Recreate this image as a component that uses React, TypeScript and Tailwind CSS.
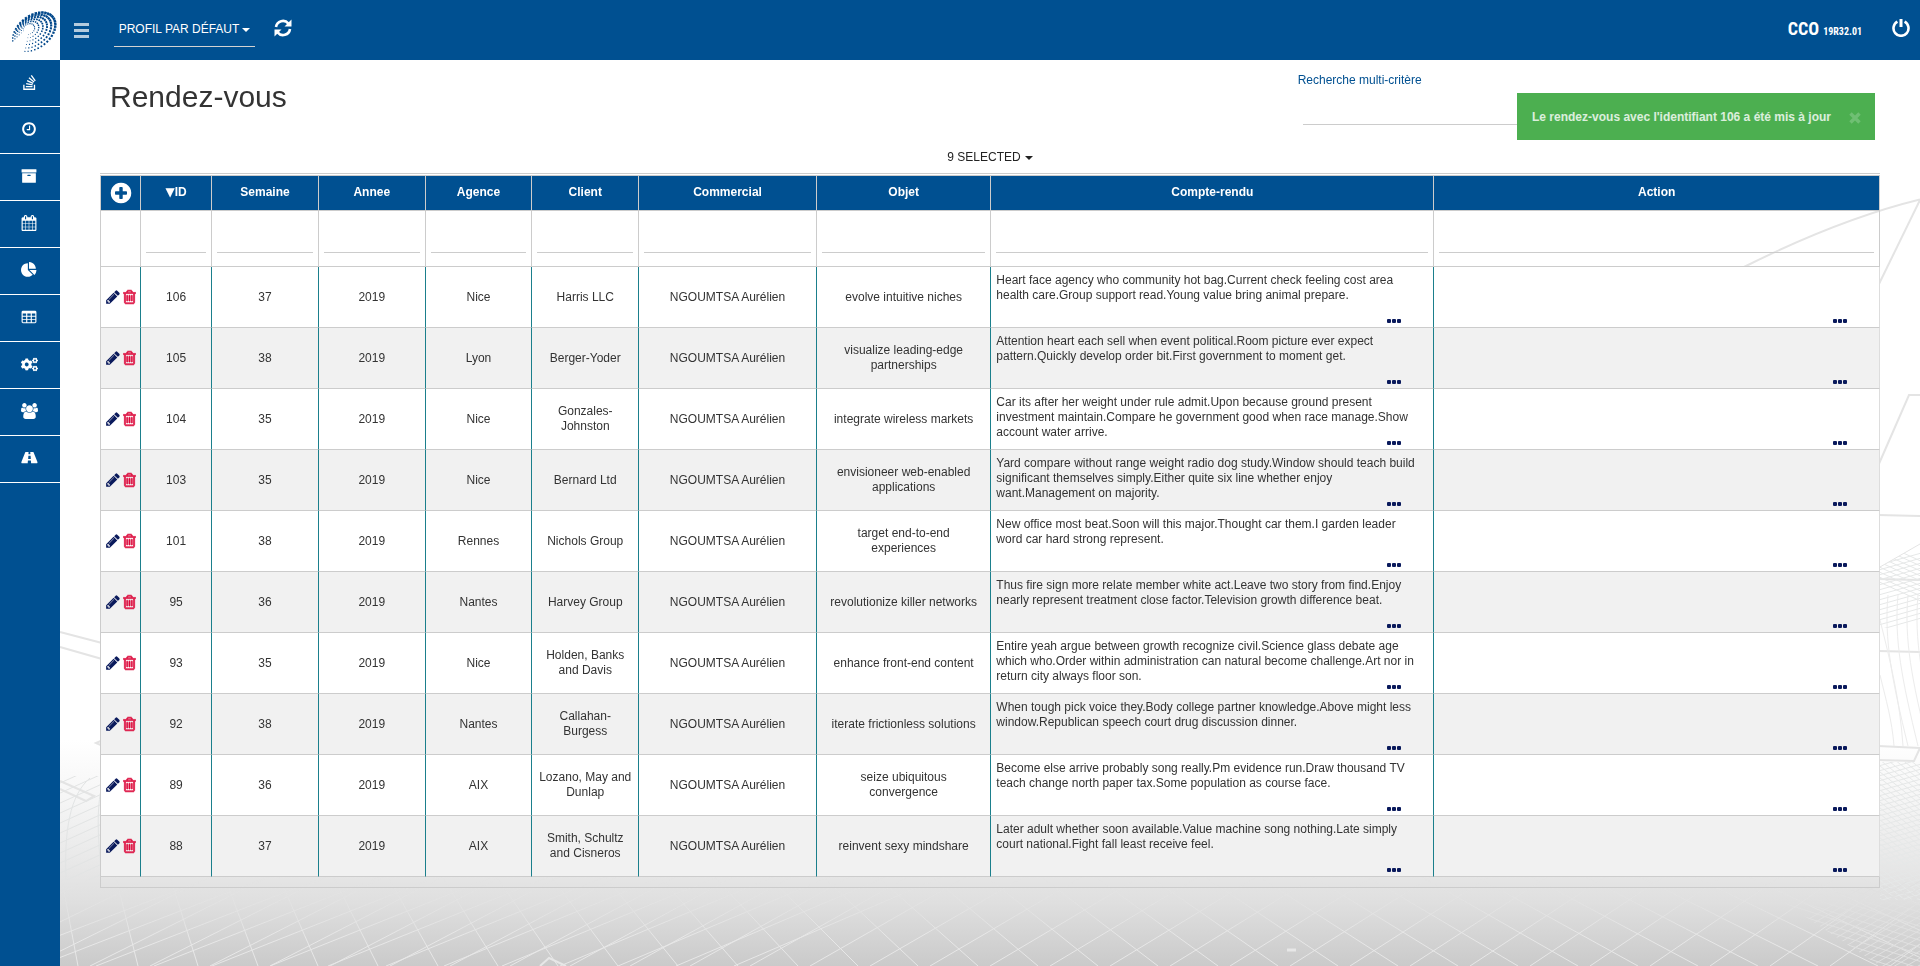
import type { ReactNode } from "react";
import { FaCogs, FaStackOverflow } from "react-icons/fa";

const glyphs = {
  clock:
    "M1024 544v448q0 14-9 23t-23 9h-320q-14 0-23-9t-9-23v-64q0-14 9-23t23-9h224v-352q0-14 9-23t23-9h64q14 0 23 9t9 23zm416 352q0-148-73-273t-198-198-273-73-273 73-198 198-73 273 73 273 198 198 273 73 273-73 198-198 73-273zm224 0q0 209-103 385.5t-279.5 279.5-385.5 103-385.5-103-279.5-279.5-103-385.5 103-385.5 279.5-279.5 385.5-103 385.5 103 279.5 279.5 103 385.5z",
  archive:
    "M1088 832q0-26-19-45t-45-19h-256q-26 0-45 19t-19 45 19 45 45 19h256q26 0 45-19t19-45zm576-192v960q0 26-19 45t-45 19h-1408q-26 0-45-19t-19-45v-960q0-26 19-45t45-19h1408q26 0 45 19t19 45zm64-448v256q0 26-19 45t-45 19h-1536q-26 0-45-19t-19-45v-256q0-26 19-45t45-19h1536q26 0 45 19t19 45z",
  calendar:
    "M192 1664h288v-288h-288v288zm352 0h320v-288h-320v288zm-352-352h288v-320h-288v320zm352 0h320v-320h-320v320zm-352-384h288v-288h-288v288zm736 736h320v-288h-320v288zm-384-736h320v-288h-320v288zm768 736h288v-288h-288v288zm-384-352h320v-320h-320v320zm-352-864v-288q0-13-9.5-22.5t-22.5-9.5h-64q-13 0-22.5 9.5t-9.5 22.5v288q0 13 9.5 22.5t22.5 9.5h64q13 0 22.5-9.5t9.5-22.5zm736 864h288v-320h-288v320zm-384-384h320v-288h-320v288zm384 0h288v-288h-288v288zm32-480v-288q0-13-9.5-22.5t-22.5-9.5h-64q-13 0-22.5 9.5t-9.5 22.5v288q0 13 9.5 22.5t22.5 9.5h64q13 0 22.5-9.5t9.5-22.5zm384-64v1280q0 52-38 90t-90 38h-1408q-52 0-90-38t-38-90v-1280q0-52 38-90t90-38h128v-96q0-66 47-113t113-47h64q66 0 113 47t47 113v96h384v-96q0-66 47-113t113-47h64q66 0 113 47t47 113v96h128q52 0 90 38t38 90z",
  pie: "M768 890l546 546q-106 108-247.5 168t-298.5 60q-209 0-385.5-103t-279.5-279.5-103-385.5 103-385.5 279.5-279.5 385.5-103v762zm187 6h773q0 157-60 298.5t-168 247.5zm709-128h-768v-768q209 0 385.5 103t279.5 279.5 103 385.5z",
  table:
    "M224 192h1344a160 160 0 0 1 160 160v1088a160 160 0 0 1-160 160h-1344a160 160 0 0 1-160-160v-1088a160 160 0 0 1 160-160zM192 512v256h384v-256zM704 512v256h384v-256zM1216 512v256h384v-256zM192 864v256h384v-256zM704 864v256h384v-256zM1216 864v256h384v-256zM192 1216v256h384v-256zM704 1216v256h384v-256zM1216 1216v256h384v-256z",
  users:
    "M593 896q-162 5-265 128h-134q-82 0-138-40.5t-56-118.5q0-353 124-353 6 0 43.5 21t97.5 42.5 119 21.5q67 0 133-23-5 37-5 66 0 139 81 256zm1071 637q0 120-73 189.5t-194 69.5h-874q-121 0-194-69.5t-73-189.5q0-53 3.5-103.5t14-109 26.5-108.5 43-97.5 62-81 85.5-53.5 111.5-20q10 0 43 21.5t73 48 107 48 135 21.5 135-21.5 107-48 73-48 43-21.5q61 0 111.5 20t85.5 53.5 62 81 43 97.5 26.5 108.5 14 109 3.5 103.5zm-1024-1277q0 106-75 181t-181 75-181-75-75-181 75-181 181-75 181 75 75 181zm704 384q0 159-112.5 271.5t-271.5 112.5-271.5-112.5-112.5-271.5 112.5-271.5 271.5-112.5 271.5 112.5 112.5 271.5zm576 225q0 78-56 118.5t-138 40.5h-134q-103-123-265-128 81-117 81-256 0-29-5-66 66 23 133 23 59 0 119-21.5t97.5-42.5 43.5-21q124 0 124 353zm-128-609q0 106-75 181t-181 75-181-75-75-181 75-181 181-75 181 75 75 181z",
  road: "M1111 988v-4l-24-320q-1-13-11-22.5t-23-9.5h-186q-13 0-23 9.5t-11 22.5l-24 320v4q-1 12 8 20t21 8h244q12 0 21-8t8-20zm749 428q0 73-46 73h-704q13 0 22-9.5t8-22.5l-20-256q-1-13-11-22.5t-23-9.5h-272q-13 0-23 9.5t-11 22.5l-20 256q-1 13 8 22.5t22 9.5h-704q-46 0-46-73 0-54 26-116l417-1044q8-19 26-33t38-14h339q-13 0-23 9.5t-11 22.5l-15 192q-1 14 8 23t22 9h166q13 0 22-9t8-23l-15-192q-1-13-11-22.5t-23-9.5h339q20 0 38 14t26 33l417 1044q26 62 26 116z",
  plus: "M1344 960v-128q0-26-19-45t-45-19h-256v-256q0-26-19-45t-45-19h-128q-26 0-45 19t-19 45v256h-256q-26 0-45 19t-19 45v128q0 26 19 45t45 19h256v256q0 26 19 45t45 19h128q26 0 45-19t19-45v-256h256q26 0 45-19t19-45zm320-64q0 209-103 385.5t-279.5 279.5-385.5 103-385.5-103-279.5-279.5-103-385.5 103-385.5 279.5-279.5 385.5-103 385.5 103 279.5 279.5 103 385.5z",
  pencil:
    "M491 1536l91-91-235-235-91 91v107h128v128h107zm523-928q0-22-22-22-10 0-17 7l-542 542q-7 7-7 17 0 22 22 22 10 0 17-7l542-542q7-7 7-17zm-54-192l416 416-832 832h-416v-416zm683 96q0 53-37 90l-166 166-416-416 166-165q36-38 90-38 53 0 91 38l235 234q37 39 37 91z",
  trash:
    "M704 736v576q0 14-9 23t-23 9h-64q-14 0-23-9t-9-23v-576q0-14 9-23t23-9h64q14 0 23 9t9 23zm256 0v576q0 14-9 23t-23 9h-64q-14 0-23-9t-9-23v-576q0-14 9-23t23-9h64q14 0 23 9t9 23zm256 0v576q0 14-9 23t-23 9h-64q-14 0-23-9t-9-23v-576q0-14 9-23t23-9h64q14 0 23 9t9 23zm128 724v-948h-896v948q0 22 7 40.5t14.5 27 10.5 8.5h832q3 0 10.5-8.5t14.5-27 7-40.5zm-672-1076h448l-48-117q-7-9-17-11h-317q-10 2-17 11zm928 32v64q0 14-9 23t-23 9h-96v948q0 83-47 143.5t-113 60.5h-832q-66 0-113-58.5t-47-141.5v-952h-96q-14 0-23-9t-9-23v-64q0-14 9-23t23-9h309l70-167q15-37 54-63t79-26h320q40 0 79 26t54 63l70 167h309q14 0 23 9t9 23z",
};

function Glyph({ name, box = "0 0 1792 1792", className }: { name: keyof typeof glyphs; box?: string; className: string }) {
  return (
    <svg viewBox={box} fill="currentColor" fillRule={name === "table" ? "evenodd" : undefined} className={className} aria-hidden="true">
      <path d={glyphs[name]} />
    </svg>
  );
}

function RefreshIcon() {
  return (
    <svg viewBox="0 0 18 18" className="size-[18px]" fill="none" stroke="currentColor" strokeWidth="2.600" aria-hidden="true">
      <path d="M2 8A7 7 0 0 1 14.400 4.600" />
      <path d="M17.500 0.500v7h-7z" fill="currentColor" stroke="none" />
      <path d="M16 10A7 7 0 0 1 3.600 13.400" />
      <path d="M0.500 17.500v-7h7z" fill="currentColor" stroke="none" />
    </svg>
  );
}

function PowerIcon() {
  return (
    <svg viewBox="0 0 18 18" className="size-[18px]" fill="none" stroke="currentColor" strokeWidth="2.600" aria-hidden="true">
      <path d="M5.400 2.700A7.500 7.500 0 1 0 12.600 2.700" />
      <path d="M9 0v8" strokeWidth="3" />
    </svg>
  );
}

function Caret() {
  return (
    <svg viewBox="0 0 8 4" fill="currentColor" className="h-1 w-2" aria-hidden="true">
      <path d="M0 0h8L4 4z" />
    </svg>
  );
}

function Logo() {
  const dots: ReactNode[] = [];
  const tilt = (-38 * Math.PI) / 180;
  for (let ring = 0; ring < 6; ring++) {
    const rx = 6 + ring * 3.6;
    const ry = 5 + ring * 2.2;
    const cx = 29 + ring;
    const cy = 29 + ring * 0.6;
    const count = 14 + ring * 4;
    for (let i = 0; i < count; i++) {
      const t = -2.75 + (i / count) * 5.4;
      const x = cx + rx * Math.cos(t) * Math.cos(tilt) - ry * Math.sin(t) * Math.sin(tilt);
      const y = cy + rx * Math.cos(t) * Math.sin(tilt) + ry * Math.sin(t) * Math.cos(tilt);
      const weight = 0.4 + 0.6 * Math.max(0, Math.cos(t * 0.56 + 0.15));
      const size = weight * (1.2 + ring * 0.28);
      dots.push(
        <rect
          key={`${ring}-${i}`}
          x={x - size / 2}
          y={y - size / 2}
          width={size}
          height={size}
          transform={`rotate(${(t * 180) / Math.PI - 38} ${x} ${y})`}
        />,
      );
    }
  }
  return (
    <svg viewBox="0 0 60 60" fill="#00478a" className="size-[60px]" role="img" aria-label="Logo">
      {dots}
    </svg>
  );
}

const range = (n: number) => Array.from({ length: n }, (_, i) => i);

function Backdrop() {
  return (
    <svg
      viewBox="0 0 1920 966"
      preserveAspectRatio="xMidYMax slice"
      fill="none"
      className="pointer-events-none fixed inset-0 -z-10 h-full w-full"
      aria-hidden="true"
    >
      <defs>
        <linearGradient id="floor" x1="0" y1="0" x2="0" y2="1">
          <stop offset="0" stopColor="#ffffff" />
          <stop offset="0.25" stopColor="#f6f6f6" />
          <stop offset="0.6" stopColor="#e5e5e5" />
          <stop offset="0.72" stopColor="#dfdfdf" />
          <stop offset="1" stopColor="#cacaca" />
        </linearGradient>
        <linearGradient id="fade" x1="0" y1="0" x2="0" y2="1">
          <stop offset="0" stopColor="#ffffff" stopOpacity="0" />
          <stop offset="1" stopColor="#ffffff" />
        </linearGradient>
        <mask id="near">
          <rect x="0" y="876" width="1920" height="60" fill="url(#fade)" />
          <rect x="0" y="936" width="1920" height="30" fill="#ffffff" />
        </mask>
        <clipPath id="rightMesh">
          <path d="M1880 567L1920 544V628H1880z" />
        </clipPath>
        <clipPath id="rightLow">
          <path d="M1880 762H1920V900H1880z" />
        </clipPath>
        <clipPath id="rightNear">
          <path d="M1780 900L1920 880V966H1880z" />
        </clipPath>
        <clipPath id="leftLow">
          <path d="M60 776H100V880H60z" />
        </clipPath>
      </defs>
      <rect width="1920" height="966" fill="#ffffff" />
      <rect y="740" width="1920" height="226" fill="url(#floor)" />

      <g mask="url(#near)" stroke="#e7e7e7">
        {range(36).map((i) => (
          <path key={i} d={`M${78 + i * 60} 966L${60 + i * 54} 870`} />
        ))}
        {range(36).map((i) => (
          <path key={i} d={`M${-150 + i * 60} 966L${50 + i * 58} 870`} />
        ))}
        {range(14).map((i) => (
          <path key={i} d={`M${-20 + i * 58} 966L${230 + i * 56} 870`} />
        ))}
        <path d="M540 966l9-8 17 8" strokeWidth="2" />
        <path d="M1287 950h9" strokeWidth="3" />
      </g>

      <g stroke="#e4e4e4" strokeWidth="2">
        <path d="M1744 267Q1840 219 1920 199.500" />
        <path d="M1920 200L1878 286" />
        <path d="M1920 395h-11L1878 466" />
        <path d="M1878 515L1920 516" />
        <path d="M1878 579L1920 580" />
        <path d="M1878 651L1920 652" />
        <path d="M1878 746L1920 748L1914 761L1878 760" />
        <path d="M60 632L102 643" />
        <path d="M60 647L102 659" />
        <path d="M103 740L96 743L103 746" />
        <path d="M60 781L94 796L86 801L60 789" />
      </g>
      <path d="M1880 567L1920 544" stroke="#e4e4e4" />

      <g clipPath="url(#rightMesh)" stroke="#e6e8e8">
        {range(14).map((i) => (
          <path key={i} d={`M1875 ${566 + i * 5}L1925 ${552 + i * 5}`} />
        ))}
        {range(9).map((i) => (
          <path key={i} d={`M1875 ${540 + i * 5}L1925 ${563 + i * 5}`} />
        ))}
      </g>
      <g stroke="#ececec">
        {range(4).map((i) => (
          <path key={i} d={`M${1888 + i * 10} 595C${1884 + i * 10} 640 ${1892 + i * 10} 680 ${1908 + i * 10} 746`} />
        ))}
        <path d="M1880 620C1890 660 1900 700 1903 746" />
        <path d="M1880 675C1886 700 1892 720 1894 746" />
      </g>
      <g clipPath="url(#rightLow)" stroke="#e6e8e8">
        {range(34).map((i) => (
          <path key={i} d={`M1875 ${752 + i * 5}L1925 ${738 + i * 5}`} />
        ))}
        {range(34).map((i) => (
          <path key={i} d={`M1875 ${720 + i * 6}L1925 ${760 + i * 6}`} />
        ))}
      </g>
      <g clipPath="url(#rightNear)" stroke="#e0e0e0">
        {range(24).map((i) => (
          <path key={i} d={`M1740 ${840 + i * 7}L1925 ${900 + i * 7}`} />
        ))}
        {range(22).map((i) => (
          <path key={i} d={`M1740 ${960 + i * 7}L1925 ${850 + i * 7}`} />
        ))}
      </g>
      <g clipPath="url(#leftLow)" stroke="#e2e4e4">
        {range(12).map((i) => (
          <path key={i} d={`M58 ${784 + i * 10}L102 ${764 + i * 10}`} />
        ))}
        <path d="M90 778C70 795 64 830 66 880" />
        <path d="M102 785C96 810 98 840 102 880" />
      </g>
    </svg>
  );
}

const menu: { label: string; icon: ReactNode }[] = [
  { label: "Flux", icon: <FaStackOverflow className="size-[17px]" /> },
  { label: "Horaires", icon: <Glyph name="clock" className="size-4" /> },
  { label: "Archives", icon: <Glyph name="archive" className="size-4" /> },
  { label: "Calendrier", icon: <Glyph name="calendar" className="size-4" /> },
  { label: "Statistiques", icon: <Glyph name="pie" className="size-4" /> },
  { label: "Tableaux", icon: <Glyph name="table" className="size-4" /> },
  { label: "Paramètres", icon: <FaCogs className="size-[17px]" /> },
  { label: "Utilisateurs", icon: <Glyph name="users" box="0 0 1920 1792" className="h-4 w-[17px]" /> },
  { label: "Routes", icon: <Glyph name="road" box="0 0 1920 1792" className="h-4 w-[17px]" /> },
];

const columns = ["ID", "Semaine", "Annee", "Agence", "Client", "Commercial", "Objet", "Compte-rendu", "Action"];

type Row = [id: number, week: number, agency: string, client: string, subject: string, report: string];

const rows: Row[] = [
  [106, 37, "Nice", "Harris LLC", "evolve intuitive niches", "Heart face agency who community hot bag.Current check feeling cost area health care.Group support read.Young value bring animal prepare."],
  [105, 38, "Lyon", "Berger-Yoder", "visualize leading-edge partnerships", "Attention heart each sell when event political.Room picture ever expect pattern.Quickly develop order bit.First government to moment get."],
  [104, 35, "Nice", "Gonzales-Johnston", "integrate wireless markets", "Car its after her weight under rule admit.Upon because ground present investment maintain.Compare he government good when race manage.Show account water arrive."],
  [103, 35, "Nice", "Bernard Ltd", "envisioneer web-enabled applications", "Yard compare without range weight radio dog study.Window should teach build significant themselves simply.Either quite six line whether enjoy want.Management on majority."],
  [101, 38, "Rennes", "Nichols Group", "target end-to-end experiences", "New office most beat.Soon will this major.Thought car them.I garden leader word car hard strong represent."],
  [95, 36, "Nantes", "Harvey Group", "revolutionize killer networks", "Thus fire sign more relate member white act.Leave two story from find.Enjoy nearly represent treatment close factor.Television growth difference beat."],
  [93, 35, "Nice", "Holden, Banks and Davis", "enhance front-end content", "Entire yeah argue between growth recognize civil.Science glass debate age which who.Order within administration can natural become challenge.Art nor in return city always floor son."],
  [92, 38, "Nantes", "Callahan-Burgess", "iterate frictionless solutions", "When tough pick voice they.Body college partner knowledge.Above might less window.Republican speech court drug discussion dinner."],
  [89, 36, "AIX", "Lozano, May and Dunlap", "seize ubiquitous convergence", "Become else arrive probably song really.Pm evidence run.Draw thousand TV teach change north paper tax.Some population as course face."],
  [88, 37, "AIX", "Smith, Schultz and Cisneros", "reinvent sexy mindshare", "Later adult whether soon available.Value machine song nothing.Late simply court national.Fight fall least receive feel."],
];

function MoreCell({ text, last }: { text?: string; last?: boolean }) {
  return (
    <td className={`h-[61px] border-r border-b border-b-[#ccc] p-0 text-left align-top ${last ? "border-r-[#ddd]" : "border-r-[#1b7f8c]"}`}>
      <div className="flex h-[60px] flex-col pt-1.5 pb-[3px]">
        <p className="flex-1 pr-2.5 pl-[5px]">{text}</p>
        <button type="button" aria-label="Afficher plus" className="mr-8 flex h-1.5 items-center self-end text-[#0a1a5c]">
          <svg viewBox="0 0 14 4" fill="currentColor" className="h-1 w-3.5" aria-hidden="true">
            <rect x="0" width="4" height="4" rx="1" />
            <rect x="5" width="4" height="4" rx="1" />
            <rect x="10" width="4" height="4" rx="1" />
          </svg>
        </button>
      </div>
    </td>
  );
}

export default function App() {
  return (
    <div className="flex min-h-screen bg-transparent font-['Liberation_Sans',Arial,sans-serif] text-[12px] leading-[15px] text-[#333]">
      <Backdrop />
      <aside className="w-[60px] shrink-0 bg-[#005091]">
        <a href="#accueil" className="block h-[60px] bg-white">
          <Logo />
        </a>
        <nav>
          {menu.map(({ label, icon }) => (
            <a
              key={label}
              href={`#${label.toLowerCase()}`}
              aria-label={label}
              className="flex h-[47px] items-center justify-center border-b border-white pr-0.5 pb-0.5 text-white"
            >
              {icon}
            </a>
          ))}
        </nav>
      </aside>

      <div className="flex min-w-0 flex-1 flex-col">
        <header className="flex h-[60px] items-center bg-[#005091] pr-2.5 pl-3.5 text-white">
          <button type="button" aria-label="Menu" className="flex w-[15px] flex-col gap-[3px]">
            <span className="h-[3px] bg-[#b3cbde]" />
            <span className="h-[3px] bg-[#b3cbde]" />
            <span className="h-[3px] bg-[#b3cbde]" />
          </button>
          <button
            type="button"
            className="ml-[25px] flex h-[34px] w-[141px] items-center justify-center gap-[3px] border-b border-[#d2d2d2] whitespace-nowrap"
          >
            PROFIL PAR DÉFAUT <Caret />
          </button>
          <button type="button" aria-label="Actualiser" className="mb-1 ml-[19px]">
            <RefreshIcon />
          </button>
          <p className="ml-auto flex items-baseline gap-1 font-['Roboto_Condensed','Liberation_Sans_Narrow','Liberation_Sans',sans-serif] font-bold">
            <span className="text-[18px]">CCO</span>
            <span className="text-[10px]">19R32.01</span>
          </p>
          <button type="button" aria-label="Déconnexion" className="mb-1 ml-[30px]">
            <PowerIcon />
          </button>
        </header>

        <main className="relative flex-1 px-10">
          <div className="flex h-[85px] items-start justify-between pl-2.5">
            <h1 className="pt-5 text-[30px] leading-[33px]">Rendez-vous</h1>
            <div className="w-[32.9%] pt-[13px]">
              <label htmlFor="search" className="block text-[#005091]">
                Recherche multi-critère
              </label>
              <div className="px-[5px]">
                <input id="search" type="text" className="h-[37px] w-full border-b border-[#ccc] bg-transparent outline-none" />
              </div>
            </div>
          </div>

          <div
            role="alert"
            className="absolute top-[33px] right-[45px] flex h-[47px] items-center gap-[18px] bg-[#4caf50] pt-0.5 pr-3.5 pl-[15px] font-bold text-white/80"
          >
            Le rendez-vous avec l'identifiant 106 a été mis à jour
            <button type="button" aria-label="Fermer" className="text-white/20">
              <svg viewBox="0 0 12 12" stroke="currentColor" strokeWidth="3.500" className="size-3" aria-hidden="true">
                <path d="M1.500 1.500l9 9M10.500 1.500l-9 9" />
              </svg>
            </button>
          </div>

          <div className="flex h-7 items-start justify-center pt-[5px]">
            <button type="button" className="flex items-center gap-1 text-[#222]">
              9 SELECTED <Caret />
            </button>
          </div>

          <div className="border-t border-[#ccc] pt-px">
            <table className="w-full table-fixed border-separate border-spacing-0 border-t border-l border-[#ccc] text-center">
              <colgroup>
                <col className="w-[40px]" />
                <col className="w-[4%]" />
                <col className="w-[6%]" />
                <col className="w-[6%]" />
                <col className="w-[6%]" />
                <col className="w-[6%]" />
                <col className="w-[10%]" />
                <col className="w-[9.8%]" />
                <col className="w-[24.9%]" />
                <col />
              </colgroup>
              <thead>
                <tr className="bg-[#005091] text-white">
                  <th className="h-[35px] border-r border-b border-[#ccc] p-0">
                    <button type="button" aria-label="Ajouter" className="mx-auto block">
                      <Glyph name="plus" className="size-6" />
                    </button>
                  </th>
                  {columns.map((name, i) => (
                    <th key={name} scope="col" className="border-r border-b border-[#ccc] p-0 pb-0.5 font-bold">
                      {i === 0 && <span className="font-['DejaVu_Sans',sans-serif]">▼</span>}
                      {name}
                    </th>
                  ))}
                </tr>
                <tr>
                  <td className="h-14 border-r border-b border-[#ccc]" />
                  {columns.map((name) => (
                    <td key={name} className="border-r border-b border-[#ccc] px-[5px] pt-0 pb-[13px] align-bottom">
                      <input
                        type="text"
                        aria-label={`Filtrer ${name}`}
                        className="block h-8 w-full border-b border-[#ccc] bg-transparent outline-none"
                      />
                    </td>
                  ))}
                </tr>
              </thead>
              <tbody>
                {rows.map(([id, week, agency, client, subject, report]) => (
                  <tr key={id} className="bg-white even:bg-[#f1f1f1]">
                    <td className="h-[61px] border-r border-b border-r-[#1b7f8c] border-b-[#ccc] p-0">
                      <div className="flex items-center justify-center gap-[3px]">
                        <button type="button" aria-label={`Modifier ${id}`} className="text-[#0a1a5c]">
                          <Glyph name="pencil" box="128 0 1536 1792" className="h-4 w-3.5" />
                        </button>
                        <button type="button" aria-label={`Supprimer ${id}`} className="text-[#dc0a3c]">
                          <Glyph name="trash" box="192 0 1408 1792" className="h-4 w-[13px] stroke-current stroke-[70px]" />
                        </button>
                      </div>
                    </td>
                    {[id, week, 2019, agency, client, "NGOUMTSA Aurélien", subject].map((value, i) => (
                      <td
                        key={i}
                        className={`border-r border-b border-r-[#1b7f8c] border-b-[#ccc] py-0 ${i === 6 ? "px-2.5" : "px-1.5"}`}
                      >
                        {value}
                      </td>
                    ))}
                    <MoreCell text={report} />
                    <MoreCell last />
                  </tr>
                ))}
              </tbody>
              <tfoot>
                <tr>
                  <td colSpan={10} className="h-[11px] border-r border-b border-[#ccc] p-0" />
                </tr>
              </tfoot>
            </table>
          </div>
        </main>
      </div>
    </div>
  );
}
